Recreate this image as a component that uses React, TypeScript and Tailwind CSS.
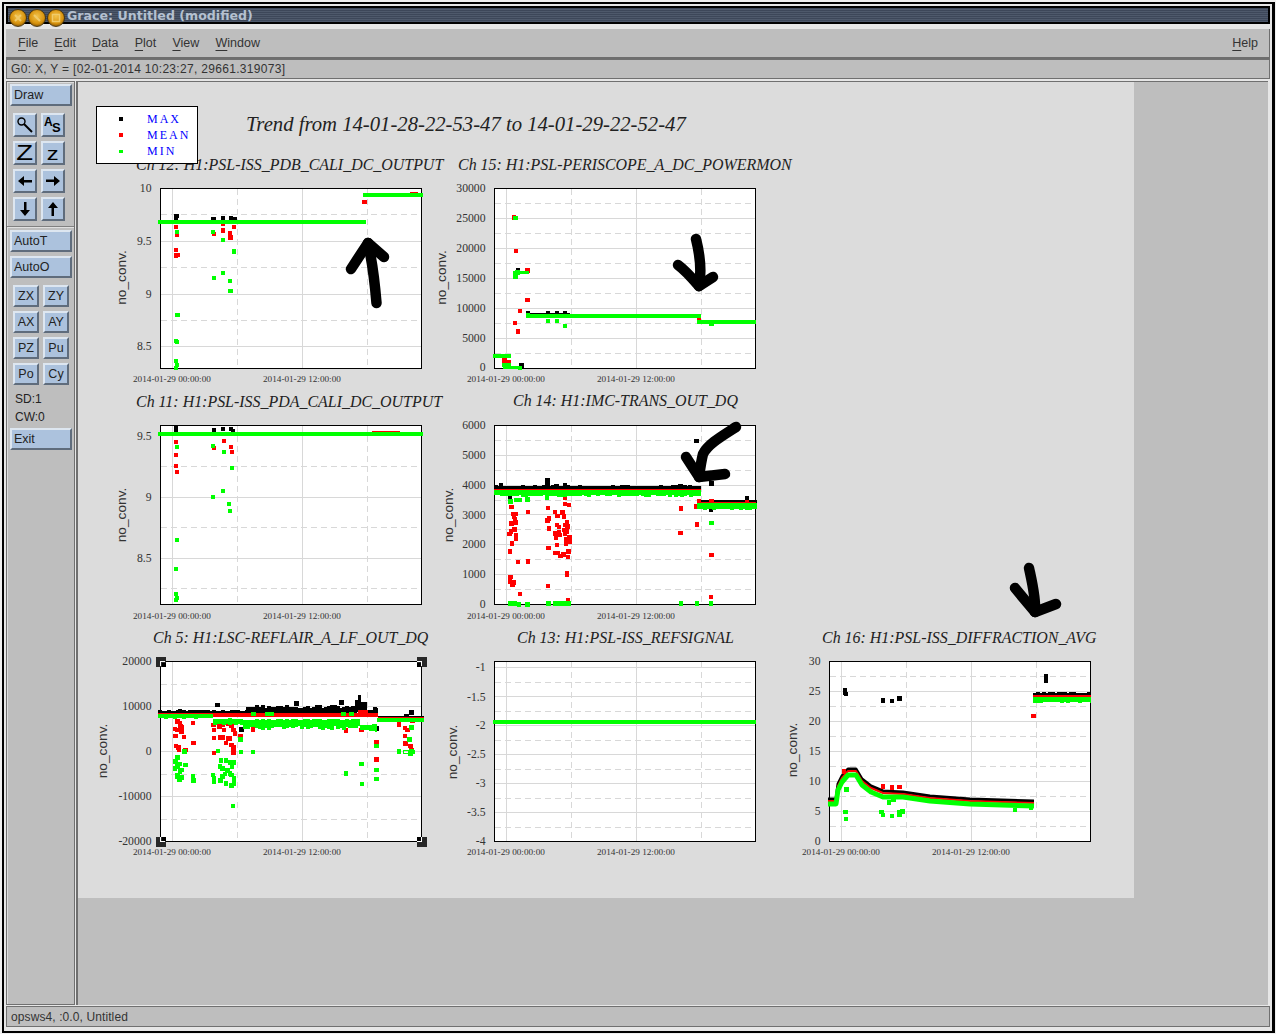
import type { ReactNode } from "react";

type Pt = readonly [number, number];

const bevel =
  "box-border flex items-center border-2 border-t-[#dde6f0] border-l-[#dde6f0] border-b-[#5f6c7c] border-r-[#5f6c7c] bg-[#acc2dd] text-[12.5px] leading-none text-[#222]";

// crop coords (3x zoom) -> screen coords
const at = (ox: number, oy: number, pts: Pt[]): Pt[] => pts.map(([x, y]) => [ox + x / 3, oy + y / 3]);

function Dots({ pts, fill, size = 4.6 }: { pts: Pt[]; fill: string; size?: number }) {
  return (
    <g fill={fill}>
      {pts.map(([x, y], i) => (
        <rect key={i} x={x - size / 2} y={y - size / 2} width={size} height={size} />
      ))}
    </g>
  );
}

// thick scalloped trace, pseudo random so it looks the same each time
function Band({ x0, x1, y, h, amp = 1.5, up = 0.3, fill }: { x0: number; x1: number; y: number; h: number; amp?: number; up?: number; fill: string }) {
  const rects = [];
  for (let x = x0; x < x1; x += 3) {
    const r = Math.abs(Math.sin(x * 12.9898) * 43758.5453) % 1;
    const r2 = Math.abs(Math.sin(x * 78.233) * 12543.123) % 1;
    rects.push(<rect key={x} x={x} y={y - r * amp * up} width={Math.min(3.5, x1 - x)} height={h + r * amp * up + r2 * amp} />);
  }
  return <g fill={fill}>{rects}</g>;
}

type PlotProps = {
  x: number;
  y: number;
  h?: number;
  title: string;
  titleX: number;
  titleY: number;
  labelX: number;
  labelY: number;
  dateY: number;
  dateX: number;
  ticks: [string, number][];
  solid: number[];
  dashed: number[];
  children?: ReactNode;
};

function Plot({ x, y, h = 180, title, titleX, titleY, labelX, labelY, dateY, dateX, ticks, solid, dashed, children }: PlotProps) {
  const w = 261;
  return (
    <g>
      <text x={titleX} y={titleY} fontSize="15.95" fill="#222" className="italic">
        {title}
      </text>
      <rect x={x} y={y} width={w} height={h} fill="#fff" />
      <g stroke="#d8d8d8" strokeWidth="1">
        {solid.map((v) => (
          <line key={v} x1={x} x2={x + w} y1={v} y2={v} />
        ))}
        {[12, 142].map((v) => (
          <line key={v} x1={x + v} x2={x + v} y1={y} y2={y + h} />
        ))}
      </g>
      <g stroke="#d8d8d8" strokeWidth="1" strokeDasharray="6 4">
        {dashed.map((v) => (
          <line key={v} x1={x} x2={x + w} y1={v} y2={v} />
        ))}
        {[77, 207].map((v) => (
          <line key={v} x1={x + v} x2={x + v} y1={y} y2={y + h} />
        ))}
      </g>
      <rect x={x} y={y} width={w} height={h} fill="none" stroke="#000" strokeWidth="1" />
      {ticks.map(([t, v]) => (
        <text key={t} x={x - 9} y={v + 4} fontSize="11.7" textAnchor="end" fill="#333">
          {t}
        </text>
      ))}
      <text x={dateX} y={dateY} fontSize="9.2" fill="#333">
        2014-01-29 00:00:00
      </text>
      <text x={dateX + 130} y={dateY} fontSize="9.2" fill="#333">
        2014-01-29 12:00:00
      </text>
      <text
        transform={`translate(${labelX} ${labelY}) rotate(-90)`}
        fontSize="13.7"
        textAnchor="middle"
        fill="#333"
        className="font-['Liberation_Sans',sans-serif]"
      >
        no_conv.
      </text>
      {children}
    </g>
  );
}

function Scrawl({ lines }: { lines: string[] }) {
  return (
    <g fill="none" stroke="#000" strokeWidth="10.5" strokeLinecap="round" strokeLinejoin="round">
      {lines.map((d) => (
        <path key={d} d={d} />
      ))}
    </g>
  );
}

function Handle({ x, y, dx, dy }: { x: number; y: number; dx: number; dy: number }) {
  return (
    <g>
      <rect x={x - 5} y={y - 5} width={10} height={10} fill="#282828" />
      <rect x={dx > 0 ? x + 1 : x - 5} y={dy > 0 ? y + 1 : y - 5} width={4} height={4} fill="#000" />
      <path d={`M${x + dx * 4.5} ${y}H${x}V${y + dy * 4.5}`} fill="none" stroke="#fff" strokeWidth="1" />
    </g>
  );
}

function Canvas() {
  const c1 = (p: Pt[]) => at(120, 150, p);
  const c2 = (p: Pt[]) => at(450, 150, p);
  const c4 = (p: Pt[]) => at(440, 390, p);
  const c5 = (p: Pt[]) => at(90, 640, p);
  const c7 = (p: Pt[]) => at(780, 550, p);
  return (
    <svg
      width={1056}
      height={816}
      viewBox="78 82 1056 816"
      className="block shrink-0 bg-[#dcdcdc] font-['Liberation_Serif',serif]"
      shapeRendering="crispEdges"
    >
      <text x={246} y={131} fontSize="20.7" fill="#222" className="italic">
        Trend from 14-01-28-22-53-47 to 14-01-29-22-52-47
      </text>

      <Plot
        x={160.5} y={188.5} title="Ch 12: H1:PSL-ISS_PDB_CALI_DC_OUTPUT" titleX={136} titleY={170}
        labelX={125.5} labelY={277.5} dateX={133} dateY={382}
        ticks={[["10", 188], ["9.5", 241], ["9", 294], ["8.5", 346]]}
        solid={[241.5, 294.5, 346.5]} dashed={[214.5, 267.5, 320.5]}
      >
        <Dots fill="#000" pts={c1([[168, 205], [170, 198], [168, 200], [281, 207], [309, 204], [333, 204], [343, 209]])} />
        <Dots fill="#f00" pts={c1([[168, 231], [171, 253], [282, 252], [309, 241], [330, 249], [342, 231], [332, 262], [168, 300], [168, 317], [172, 315], [733, 156], [309, 220]])} />
        <rect x={410} y={192} width={8} height={2} fill="#f00" />
        <rect x={158} y={220} width={208} height={4} fill="#0f0" />
        <rect x={363} y={193} width={60} height={4} fill="#0f0" />
        <Dots fill="#0f0" pts={c1([[171, 246], [279, 246], [309, 270], [342, 305], [282, 384], [309, 369], [330, 393], [332, 423], [173, 495], [168, 573], [171, 576], [168, 633], [171, 645], [168, 654]])} />
      </Plot>

      <Plot
        x={494.5} y={188.5} title="Ch 15: H1:PSL-PERISCOPE_A_DC_POWERMON" titleX={458} titleY={170}
        labelX={446} labelY={277.5} dateX={467} dateY={382}
        ticks={[["30000", 188], ["25000", 218], ["20000", 248], ["15000", 278], ["10000", 308], ["5000", 338], ["0", 367]]}
        solid={[218.5, 248.5, 278.5, 308.5, 338.5]} dashed={[203.5, 233.5, 263.5, 293.5, 323.5, 353.5]}
      >
        <Dots fill="#000" pts={c2([[204, 362], [234, 489], [294, 489], [321, 489], [345, 489], [215, 647]])} />
        <rect x={526} y={313} width={44} height={1.5} fill="#000" />
        <Dots fill="#f00" pts={c2([[192, 203], [198, 303], [232, 450], [210, 483], [195, 519], [204, 544], [163, 632], [175, 636], [747, 511], [232, 362]])} />
        <rect x={493} y={354} width={13} height={4} fill="#0f0" />
        <rect x={503} y={366} width={15} height={2.5} fill="#0f0" />
        <rect x={503} y={367} width={7} height={2} fill="#0f0" />
        <rect x={518} y={270.5} width={11} height={3} fill="#0f0" />
        <rect x={526} y={314} width={175} height={4} fill="#0f0" />
        <rect x={697} y={320} width={59} height={4} fill="#0f0" />
        <Dots fill="#0f0" pts={c2([[197, 204], [197, 370], [197, 380], [202, 367], [175, 618], [163, 645], [177, 645], [210, 654], [234, 497], [294, 513], [321, 513], [345, 528], [785, 522]])} />
      </Plot>

      <Plot
        x={160.5} y={425.5} h={178.5} title="Ch 11: H1:PSL-ISS_PDA_CALI_DC_OUTPUT" titleX={136} titleY={406.5}
        labelX={125.5} labelY={515} dateX={133} dateY={619}
        ticks={[["9.5", 436], ["9", 497], ["8.5", 558]]}
        solid={[435.5, 497.5, 558.5]} dashed={[466.5, 527.5, 588.5]}
      >
        <Dots fill="#000" pts={[[176, 427], [176, 431], [214, 430], [223, 429], [231, 429], [233, 431]]} />
        <rect x={372} y={431} width={28} height={2} fill="#f00" />
        <Dots fill="#f00" pts={[[176, 442], [176, 455], [176, 466], [177, 472], [214, 448], [224, 441], [231, 447], [232, 452]]} />
        <rect x={158} y={432} width={265} height={4} fill="#0f0" />
        <Dots fill="#0f0" pts={[[177, 447], [213, 446], [224, 452], [232, 468], [213, 497], [223, 491], [229, 504], [230, 511], [177, 540], [176, 569], [176, 594], [177, 598], [176, 600]]} size={3.8} />
      </Plot>

      <Plot
        x={494.5} y={425.5} h={178.5} title="Ch 14: H1:IMC-TRANS_OUT_DQ" titleX={513} titleY={405.5}
        labelX={453} labelY={515} dateX={467} dateY={619}
        ticks={[["6000", 425], ["5000", 455], ["4000", 485], ["3000", 514.5], ["2000", 544], ["1000", 574], ["0", 604]]}
        solid={[455.5, 485.5, 514.5, 544.5, 574.5]} dashed={[440.5, 470.5, 500.5, 529.5, 559.5, 589.5]}
      >
        <Band x0={494} x1={701} y={486.5} h={3} amp={1.2} up={1} fill="#000" />
        <Band x0={697} x1={757} y={500.5} h={2.5} amp={1} up={1} fill="#000" />
        <Dots fill="#000" pts={c4([[183, 285], [210, 325], [225, 295], [264, 295], [323, 270], [323, 280], [350, 290], [375, 287], [722, 288], [750, 291], [769, 153], [815, 281], [813, 358], [921, 325]])} />
        <rect x={494} y={489} width={207} height={1.6} fill="#f00" />
        <rect x={698} y={502} width={58} height={1.6} fill="#f00" />
        <Dots fill="#f00" pts={c4([[215, 351], [220, 372], [228, 372], [222, 380], [225, 388], [227, 398], [214, 400], [224, 418], [213, 425], [208, 432], [228, 437], [228, 447], [216, 461], [210, 484], [234, 516], [264, 514], [211, 561], [210, 575], [222, 577], [218, 585], [240, 612], [324, 354], [264, 366], [345, 366], [352, 378], [372, 380], [368, 368], [327, 386], [322, 392], [375, 322], [375, 342], [387, 345], [351, 405], [357, 411], [327, 416], [381, 398], [375, 405], [382, 409], [372, 420], [357, 426], [347, 430], [375, 432], [381, 425], [348, 444], [360, 435], [388, 443], [378, 447], [388, 456], [378, 460], [351, 465], [326, 474], [385, 484], [345, 489], [354, 489], [370, 493], [362, 498], [384, 501], [381, 549], [381, 555], [324, 588], [384, 630], [723, 355], [721, 429], [771, 404], [770, 349], [777, 335], [815, 333], [815, 495], [813, 621], [921, 336]])} />
        <Band x0={494} x1={701} y={490} h={5} amp={2} up={0.2} fill="#0f0" />
        <Band x0={697} x1={757} y={503.5} h={5} amp={2} up={0.2} fill="#0f0" />
        <Dots fill="#0f0" pts={c4([[212, 335], [228, 330], [240, 330], [262, 328], [321, 324], [815, 399], [212, 641], [225, 641], [237, 644], [263, 643], [325, 641], [345, 641], [355, 641], [365, 641], [375, 641], [386, 641], [723, 641], [771, 641], [813, 641]])} />
      </Plot>

      <Plot
        x={160.5} y={661.5} title="Ch 5: H1:LSC-REFLAIR_A_LF_OUT_DQ" titleX={153} titleY={642.5}
        labelX={107} labelY={751} dateX={133} dateY={855}
        ticks={[["20000", 661], ["10000", 706], ["0", 751], ["-10000", 796], ["-20000", 841]]}
        solid={[706.5, 751.5, 796.5]} dashed={[684.5, 774.5, 819.5]}
      >
        <Band x0={158} x1={246} y={711} h={2} amp={1} up={1} fill="#000" />
        <Band x0={246} x1={357} y={708} h={5} amp={3} up={1} fill="#000" />
        <rect x={355} y={700} width={6} height={12} fill="#000" />
        <rect x={358} y={695} width={3} height={8} fill="#000" />
        <rect x={361} y={702} width={6} height={10} fill="#000" />
        <rect x={367} y={710} width={11} height={6} fill="#000" />
        <rect x={373} y={708} width={5} height={8} fill="#000" />
        <rect x={378} y={716} width={46} height={1} fill="#000" />
        <Dots fill="#000" pts={c5([[383, 195], [620, 190], [755, 187], [855, 208], [965, 218], [950, 228], [270, 215], [455, 268], [860, 265]])} />
        <rect x={158} y={713} width={220} height={4} fill="#f00" />
        <rect x={358} y={710} width={10} height={6} fill="#f00" />
        <rect x={378} y={717} width={46} height={1.5} fill="#f00" />
        <Dots fill="#f00" pts={c5([[255, 267], [262, 245], [270, 250], [272, 260], [262, 270], [276, 262], [275, 275], [256, 288], [282, 291], [258, 318], [266, 322], [267, 330], [286, 330], [309, 249], [310, 309], [370, 255], [372, 270], [372, 294], [392, 292], [398, 292], [388, 260], [398, 255], [402, 270], [415, 252], [424, 258], [430, 270], [435, 280], [420, 295], [415, 296], [408, 309], [425, 315], [430, 323], [430, 337], [372, 339], [452, 288], [489, 268], [768, 271], [815, 270], [860, 306], [860, 358], [927, 254], [945, 264], [953, 270], [945, 288], [947, 311], [962, 318], [965, 330], [967, 243]])} />
        <Band x0={158} x1={213} y={714} h={3.5} amp={1.2} fill="#0f0" />
        <Band x0={213} x1={243} y={719} h={4.5} amp={2} fill="#0f0" />
        <Band x0={243} x1={360} y={720} h={6} amp={4} fill="#0f0" />
        <Band x0={360} x1={377} y={725} h={5} amp={2} fill="#0f0" />
        <Band x0={377} x1={424} y={718} h={3.5} amp={1} fill="#0f0" />
        <rect x={403} y={750} width={11} height={3} fill="none" stroke="#0f0" />
        <Dots fill="#0f0" pts={c5([[262, 352], [256, 365], [268, 372], [262, 380], [255, 385], [270, 395], [262, 405], [275, 390], [286, 375], [262, 410], [268, 418], [276, 412], [309, 410], [310, 422], [369, 405], [372, 425], [372, 415], [390, 380], [398, 385], [393, 362], [408, 362], [420, 368], [432, 367], [426, 380], [412, 392], [405, 402], [397, 410], [392, 422], [408, 430], [420, 400], [425, 405], [432, 415], [432, 430], [424, 437], [429, 498], [283, 335], [384, 333], [452, 299], [453, 336], [489, 336], [815, 372], [768, 400], [816, 432], [860, 318], [860, 390], [860, 417], [927, 335], [958, 299], [965, 263], [965, 335], [961, 340], [490, 222], [532, 222], [545, 222], [760, 222], [785, 222]])} />
        <Handle x={160.5} y={661.5} dx={1} dy={1} />
        <Handle x={421.5} y={661.5} dx={-1} dy={1} />
        <Handle x={160.5} y={841.5} dx={1} dy={-1} />
        <Handle x={421.5} y={841.5} dx={-1} dy={-1} />
      </Plot>

      <Plot
        x={494.5} y={661.5} title="Ch 13: H1:PSL-ISS_REFSIGNAL" titleX={517} titleY={642.5}
        labelX={457} labelY={752} dateX={467} dateY={855}
        ticks={[["-1", 667], ["-1.5", 697], ["-2", 725], ["-2.5", 754], ["-3", 783], ["-3.5", 812], ["-4", 841]]}
        solid={[667.5, 696.5, 725.5, 754.5, 783.5, 812.5]} dashed={[682.5, 711.5, 740.5, 769.5, 798.5, 827.5]}
      >
        <rect x={493} y={720} width={263} height={4} fill="#0f0" />
      </Plot>

      <Plot
        x={829.5} y={661.5} title="Ch 16: H1:PSL-ISS_DIFFRACTION_AVG" titleX={822} titleY={642.5}
        labelX={797} labelY={750} dateX={802} dateY={855}
        ticks={[["30", 661], ["25", 691], ["20", 721], ["15", 751], ["10", 781], ["5", 811], ["0", 841]]}
        solid={[691.5, 721.5, 751.5, 781.5, 811.5]} dashed={[676.5, 706.5, 736.5, 766.5, 796.5, 826.5]}
      >
        <g fill="none" strokeLinejoin="round" shapeRendering="auto">
          <path d="M828 799H836L838 784 842 776 848 769H856L862 779 871 786 883 791 903 792 930 796 970 799 1034 801" stroke="#000" strokeWidth="3" />
          <path d="M828 801H836L838 786 842 778 848 771H856L862 781 871 788 883 793 903 794 930 798 970 801 1034 803" stroke="#f00" strokeWidth="2" />
          <path d="M828 804H836L838 790 842 782 848 775H856L862 785 871 792 883 797 903 797 930 801 970 804 1034 806" stroke="#0f0" strokeWidth="5" />
        </g>
        <Band x0={1033} x1={1091} y={693} h={2.5} amp={1} up={1} fill="#000" />
        <rect x={1033} y={695} width={58} height={2.6} fill="#f00" />
        <Band x0={1033} x1={1091} y={697} h={4.5} amp={1.6} fill="#0f0" />
        <Dots fill="#000" pts={c7([[195, 422], [195, 428], [198, 432], [309, 451], [336, 453], [358, 446], [798, 380], [798, 393]])} />
        <Dots fill="#f00" pts={c7([[192, 665], [309, 710], [336, 713], [358, 711], [761, 498]])} />
        <Dots fill="#0f0" pts={c7([[197, 786], [198, 807], [199, 718], [305, 786], [309, 795], [336, 798], [358, 787], [358, 795], [368, 785], [705, 780], [753, 773], [327, 758], [340, 750]])} />
      </Plot>

      {/* legend sits over the Ch 12 title */}
      <rect x={96.5} y={106.5} width={101} height={56.5} fill="#fff" stroke="#000" />
      <rect x={119} y={117} width={4} height={4} fill="#000" />
      <rect x={119} y={133} width={4} height={4} fill="#f00" />
      <rect x={119} y={150} width={4} height={3} fill="#0f0" />
      <g fontSize="12" fill="#00f" letterSpacing="2">
        <text x={147} y={123}>MAX</text>
        <text x={147} y={139}>MEAN</text>
        <text x={147} y={155}>MIN</text>
      </g>

      <g shapeRendering="auto">
        <Scrawl lines={["M376.5 303C375 285 373 265 368 243", "M351 269L368 243L384 257"]} />
        <Scrawl lines={["M696 239C700 255 702 270 699 286", "M678 265C685 270 692 278 699 286L713 277"]} />
        <Scrawl lines={["M736 427C722 436 708 444 703 454C701 462 700 470 699 477", "M686 457L699 477L725 474"]} />
        <Scrawl lines={["M1029 568C1032 582 1036 598 1035 612", "M1015 588L1035 612L1056 604"]} />
      </g>
    </svg>
  );
}

function WinButton({ children }: { children: ReactNode }) {
  return (
    <svg width={18} height={18} viewBox="0 0 18 18" className="shrink-0">
      <defs>
        <radialGradient id="gold" cx="50%" cy="40%" r="60%">
          <stop offset="0%" stopColor="#f2c24a" />
          <stop offset="70%" stopColor="#d8930e" />
          <stop offset="100%" stopColor="#8a5a08" />
        </radialGradient>
      </defs>
      <circle cx={9} cy={9} r={8.5} fill="url(#gold)" stroke="#3a2a08" strokeWidth="0.8" />
      {children}
    </svg>
  );
}

function Key({ children, className = "" }: { children: ReactNode; className?: string }) {
  return <div className={`${bevel} ${className}`}>{children}</div>;
}

const Wide = ({ label, className = "" }: { label: string; className?: string }) => (
  <Key className={`h-[22px] w-[62px] pl-[2px] ${className}`}>{label}</Key>
);

const Tool = ({ children }: { children: ReactNode }) => (
  <Key className="h-6 w-6 justify-center font-['Liberation_Sans',sans-serif] text-black">{children}</Key>
);

const Small = ({ label }: { label: string }) => <Key className="h-[22px] w-[26px] justify-center">{label}</Key>;

function Arrow({ angle }: { angle: number }) {
  return (
    <svg width={18} height={18} viewBox="0 0 18 18" style={{ transform: `rotate(${angle}deg)` }}>
      <path d="M2 9L8 4V8H16V10.5H8V14Z" fill="#000" />
    </svg>
  );
}

function Sidebar() {
  return (
    <aside className="box-border flex w-[69px] shrink-0 flex-col border border-[#707070] bg-[#bebebe] pt-[2px] shadow-[inset_1px_1px_0_#dedede]">
      <Wide label="Draw" className="ml-[3px]" />
      <div className="ml-[6px] mt-[7px] grid w-[52px] grid-cols-[24px_24px] gap-1">
        <Tool>
          <svg width={20} height={20} viewBox="0 0 20 20" fill="none" stroke="#000">
            <circle cx={6.5} cy={6.5} r={3.5} strokeWidth="1.4" />
            <path d="M9 9L17 17" strokeWidth="2" />
          </svg>
        </Tool>
        <Tool>
          <span className="relative block h-5 w-5 font-bold">
            <span className="absolute left-[1px] top-[1px] text-[12px]">A</span>
            <span className="absolute left-[9px] top-[6px] text-[13px]">S</span>
          </span>
        </Tool>
        <Tool>
          <span className="scale-x-125 text-[22px] leading-none">Z</span>
        </Tool>
        <Tool>
          <span className="scale-x-125 text-[19px] leading-none">z</span>
        </Tool>
        <Tool>
          <Arrow angle={0} />
        </Tool>
        <Tool>
          <Arrow angle={180} />
        </Tool>
        <Tool>
          <Arrow angle={-90} />
        </Tool>
        <Tool>
          <Arrow angle={90} />
        </Tool>
      </div>
      <div className="mt-[5px] h-[2px] border-t border-[#808080] bg-[#e0e0e0]" />
      <Wide label="AutoT" className="ml-[3px] mt-[2px]" />
      <Wide label="AutoO" className="ml-[3px] mt-1" />
      <div className="ml-[6px] mt-[7px] grid w-[56px] grid-cols-[26px_26px] gap-1">
        {["ZX", "ZY", "AX", "AY", "PZ", "Pu", "Po", "Cy"].map((l) => (
          <Small key={l} label={l} />
        ))}
      </div>
      <div className="ml-2 mt-[5px] text-[12px] leading-[18px] text-[#222]">
        SD:1
        <br />
        CW:0
      </div>
      <Wide label="Exit" className="ml-[3px] mt-[2px]" />
    </aside>
  );
}

const menus = ["File", "Edit", "Data", "Plot", "View", "Window"];

function MenuLabel({ label }: { label: string }) {
  return (
    <span>
      <span className="underline decoration-1 underline-offset-[3px]">{label[0]}</span>
      {label.slice(1)}
    </span>
  );
}

export default function App() {
  return (
    <div className="h-[1034px] w-[1276px] overflow-hidden bg-[#f0f0f0] pl-[2px] pt-[2px] font-['Liberation_Sans',sans-serif]">
      <div className="box-border flex h-[1031px] w-[1273px] flex-col border-2 border-r-[3px] border-black bg-[#e6e6e6] px-[2px] pb-[4px] pt-[2px]">
        <div className="box-border flex h-[18px] shrink-0 items-center border-2 border-black bg-[repeating-linear-gradient(180deg,#3d4759_0px,#3d4759_1px,#4e596b_1px,#4e596b_2px)] pl-[2px]">
          <div className="relative top-[3px] -ml-[1px] flex gap-[1px]">
            <WinButton>
              <path d="M6 6L12 12M12 6L6 12" stroke="#f0cb6a" strokeWidth="2" />
            </WinButton>
            <WinButton>
              <path d="M6 6L9 9M9 9L12 12" stroke="#f0cb6a" strokeWidth="2" />
            </WinButton>
            <WinButton>
              <rect x={5.5} y={5.5} width={7} height={7} fill="none" stroke="#f0cb6a" strokeWidth="1.5" />
            </WinButton>
          </div>
          <span className="relative top-px ml-[2px] font-['DejaVu_Sans',sans-serif] text-[12.6px] font-bold leading-none text-[#b4c0d0]">
            Grace: Untitled (modified)
          </span>
        </div>

        <div className="mt-[5px] box-border flex h-[30px] shrink-0 items-center gap-[16.2px] border-b-2 border-r border-[#6e6e6e] bg-[#bebebe] pl-3 pr-[11px] text-[12.5px] leading-none text-[#333]">
          {menus.map((m) => (
            <MenuLabel key={m} label={m} />
          ))}
          <span className="ml-auto">
            <MenuLabel label="Help" />
          </span>
        </div>

        <div className="box-border flex h-5 shrink-0 items-center border border-[#707070] bg-[#bebebe] pl-[4px] text-[12px] leading-none tracking-[0.31px] text-[#333]">
          G0: X, Y = [02-01-2014 10:23:27, 29661.319073]
        </div>

        <div className="mt-[2px] flex min-h-0 flex-1">
          <Sidebar />
          <main className="ml-px mr-[2px] flex min-w-0 flex-1 border-l-2 border-t border-[#707070] bg-[#bebebe]">
            <Canvas />
          </main>
        </div>

        <div className="mt-px box-border flex h-[21px] shrink-0 items-center border border-[#707070] bg-[#bebebe] pl-1 text-[12px] leading-none tracking-[0.1px] text-[#333]">
          opsws4, :0.0, Untitled
        </div>
      </div>
    </div>
  );
}
